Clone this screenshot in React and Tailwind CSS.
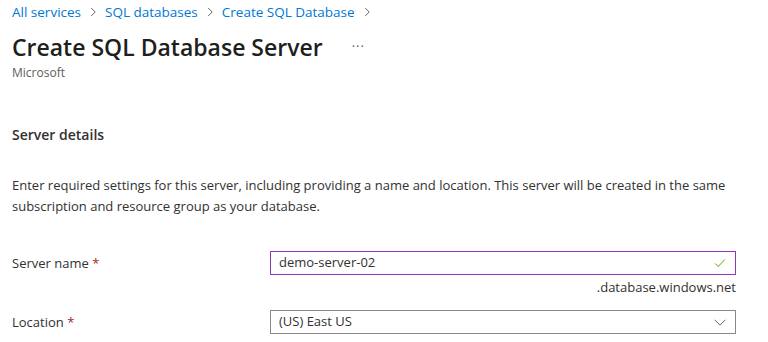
import React from "react";

const Chevron = ({ className }) => (
  <svg viewBox="0 0 16 16" className={className} fill="none" stroke="currentColor" strokeWidth="1.1">
    <path d="M6 3.5 10.5 8 6 12.5" />
  </svg>
);

const crumbs = ["All services", "SQL databases", "Create SQL Database"];

export default function App() {
  return (
    <div className="w-[768px] h-[342px] overflow-hidden bg-white px-[12px] text-[#323130]" style={{ fontFamily: '"Open Sans", "Noto Sans", sans-serif' }}>
      {/* breadcrumb */}
      <div className="flex items-center h-[24px] text-[13.5px] text-[#0078d4]">
        {crumbs.map((c) => (
          <React.Fragment key={c}>
            <span>{c}</span>
            <Chevron className="w-[14px] h-[14px] mx-[5px] text-[#605e5c]" />
          </React.Fragment>
        ))}
      </div>

      <div className="flex items-center mt-[8px] h-[30px]">
        <h1 className="text-[23px] font-semibold text-[#201f1e] leading-[30px]">Create SQL Database Server</h1>
        <span className="ml-[29px] text-[13px] text-[#605e5c] tracking-[1px]">···</span>
      </div>
      <div className="text-[12px] text-[#605e5c] mt-[2px]">Microsoft</div>

      <h2 className="mt-[42px] text-[14px] font-semibold text-[#323130]">Server details</h2>

      <p className="mt-[30px] text-[13px] leading-[21px] w-[740px]">
        Enter required settings for this server, including providing a name and location. This server will be created in the same subscription and resource group as your database.
      </p>

      <div className="mt-[34px] flex items-start">
        <label className="w-[258px] text-[13px] leading-[24px]">
          Server name <span className="text-[#a4262c]">*</span>
        </label>
        <div className="w-[466px]">
          <div className="flex items-center h-[24px] border border-[#8a3ab9] px-[8px]">
            <span className="flex-1 text-[13px]">demo-server-02</span>
            <svg viewBox="0 0 16 16" className="w-[14px] h-[14px] text-[#57a300]" fill="none" stroke="currentColor" strokeWidth="1.1">
              <path d="M2.5 8.5 6 12l7.5-8" />
            </svg>
          </div>
          <div className="text-right text-[13px] leading-[24px]">.database.windows.net</div>
        </div>
      </div>

      <div className="mt-[11px] flex items-center">
        <label className="w-[258px] text-[13px] leading-[24px]">
          Location <span className="text-[#a4262c]">*</span>
        </label>
        <div className="w-[466px] flex items-center h-[24px] border border-[#8a8886] px-[8px]">
          <span className="flex-1 text-[13px]">(US) East US</span>
          <svg viewBox="0 0 16 16" className="w-[14px] h-[14px] text-[#605e5c]" fill="none" stroke="currentColor" strokeWidth="1.1">
            <path d="M2 5.5 8 11.5 14 5.5" />
          </svg>
        </div>
      </div>
    </div>
  );
}
